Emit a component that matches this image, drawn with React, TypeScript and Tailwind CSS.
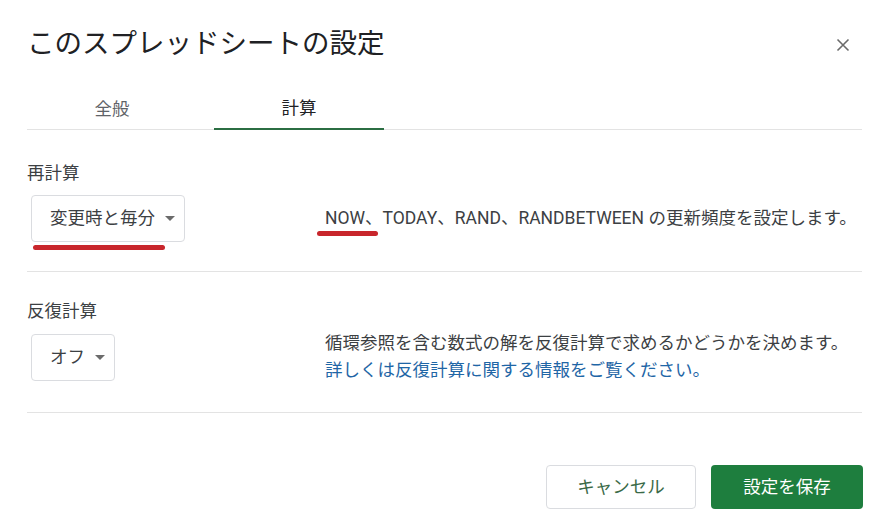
import React, { useState } from 'react';

const FONT = { fontFamily: 'Roboto, "Noto Sans CJK JP", sans-serif' };

function Caret() {
  return (
    <svg width="10" height="5" viewBox="0 0 10 5" className="shrink-0">
      <path d="M0 0h10L5 5z" fill="#6b6b6b" />
    </svg>
  );
}

function Dropdown({ value, marked }: { value: string; marked?: boolean }) {
  return (
    <div className="relative ml-[4px] w-fit">
      <button className="flex h-[47px] items-center gap-[10px] rounded-[4px] border border-[#dadce0] bg-white pl-[18px] pr-[9px] text-[17.5px] text-[#3c4043]">
        <span>{value}</span>
        <Caret />
      </button>
      {marked && (
        <div className="absolute left-[2px] top-[50px] h-[5px] w-[132px] rounded-full bg-[#c8262c]" />
      )}
    </div>
  );
}

export default function App() {
  const [tab, setTab] = useState('calc');

  return (
    <div style={FONT} className="h-[520px] w-[878px] bg-white pl-[27px] pr-[16px] text-[#3c4043]">
      {/* Header */}
      <div className="flex h-[90px] items-center justify-between">
        <h1 className="pb-[2px] text-[27.5px] leading-none text-[#202124]">このスプレッドシートの設定</h1>
        <button className="mr-[9px] flex h-[20px] w-[20px] items-center justify-center text-[#6b6b6b]">
          <svg width="14" height="14" viewBox="0 0 14 14">
            <path d="M1.5 1.5l11 11M12.5 1.5l-11 11" stroke="currentColor" strokeWidth="1.6" />
          </svg>
        </button>
      </div>

      {/* Tabs */}
      <div className="flex h-[40px] border-b border-[#e3e3e3]">
        <button
          onClick={() => setTab('general')}
          className={`-mb-px w-[170px] pb-[2px] text-[17.5px] ${tab === 'general' ? 'border-b-2 border-[#2b6e43] text-[#202124]' : 'text-[#5f6368]'}`}
        >
          全般
        </button>
        <button
          onClick={() => setTab('calc')}
          className={`-mb-px ml-[17px] w-[170px] pb-[2px] text-[17.5px] ${tab === 'calc' ? 'border-b-2 border-[#2b6e43] text-[#202124]' : 'text-[#5f6368]'}`}
        >
          計算
        </button>
      </div>

      {/* 再計算 */}
      <div className="border-b border-[#e3e3e3] pb-[29px] pt-[31px]">
        <div className="text-[17.5px] leading-[24px]">再計算</div>
        <div className="mt-[10px] grid grid-cols-[298px_1fr] items-center">
          <Dropdown value="変更時と毎分" marked />
          <div className="relative text-[17.5px] leading-[27px]">
            NOW、TODAY、RAND、RANDBETWEEN の更新頻度を設定します。
            <div className="absolute left-[-8px] top-[26px] h-[5px] w-[61px] rounded-full bg-[#c8262c]" />
          </div>
        </div>
      </div>

      {/* 反復計算 */}
      <div className="border-b border-[#e3e3e3] pb-[28px] pt-[27px]">
        <div className="text-[17.5px] leading-[24px]">反復計算</div>
        <div className="mt-[7px] grid grid-cols-[298px_1fr] items-center">
          <Dropdown value="オフ" />
          <div className="text-[17.5px] leading-[27px]">
            <div>循環参照を含む数式の解を反復計算で求めるかどうかを決めます。</div>
            <a className="text-[#1f66a6]">詳しくは反復計算に関する情報をご覧ください。</a>
          </div>
        </div>
      </div>

      {/* Footer */}
      <div className="mt-[52px] flex justify-end gap-[15px]">
        <button className="h-[44px] w-[150px] rounded-[4px] border border-[#dadce0] bg-white text-[17.5px] text-[#3a6a47]">
          キャンセル
        </button>
        <button className="-mr-px h-[44px] w-[152px] rounded-[4px] bg-[#1e7e3e] text-[17.5px] text-white">
          設定を保存
        </button>
      </div>
    </div>
  );
}
